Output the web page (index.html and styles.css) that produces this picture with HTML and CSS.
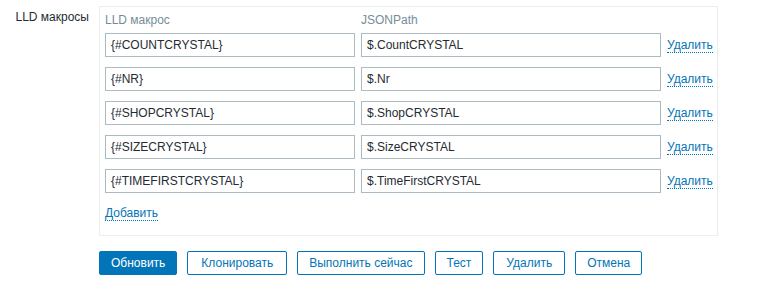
FILE: index.html
```html
<!DOCTYPE html>
<html>
<head>
<meta charset="utf-8">
<link rel="stylesheet" href="styles.css">
</head>
<body>
<div class="form-row">
  <div class="form-label">LLD макросы</div>
  <div class="form-field">
    <div class="macro-box">
      <div class="macro-grid macro-head">
        <div>LLD макрос</div>
        <div>JSONPath</div>
        <div></div>
      </div>
      <div class="macro-rows">
        <div class="macro-grid">
          <input class="text-input macro" type="text" value="{#COUNTCRYSTAL}">
          <input class="text-input path" type="text" value="$.CountCRYSTAL">
          <a class="link">Удалить</a>
        </div>
        <div class="macro-grid">
          <input class="text-input macro" type="text" value="{#NR}">
          <input class="text-input path" type="text" value="$.Nr">
          <a class="link">Удалить</a>
        </div>
        <div class="macro-grid">
          <input class="text-input macro" type="text" value="{#SHOPCRYSTAL}">
          <input class="text-input path" type="text" value="$.ShopCRYSTAL">
          <a class="link">Удалить</a>
        </div>
        <div class="macro-grid">
          <input class="text-input macro" type="text" value="{#SIZECRYSTAL}">
          <input class="text-input path" type="text" value="$.SizeCRYSTAL">
          <a class="link">Удалить</a>
        </div>
        <div class="macro-grid">
          <input class="text-input macro" type="text" value="{#TIMEFIRSTCRYSTAL}">
          <input class="text-input path" type="text" value="$.TimeFirstCRYSTAL">
          <a class="link">Удалить</a>
        </div>
      </div>
      <div class="add-row"><a class="link">Добавить</a></div>
    </div>
  </div>
</div>
<div class="buttons">
  <button class="btn btn-primary">Обновить</button>
  <button class="btn btn-wide">Клонировать</button>
  <button class="btn">Выполнить сейчас</button>
  <button class="btn">Тест</button>
  <button class="btn btn-mid">Удалить</button>
  <button class="btn">Отмена</button>
</div>
</body>
</html>
```
FILE: styles.css
```css
html, body {
  margin: 0;
  padding: 0;
  background: #ffffff;
}
body {
  font-family: "Liberation Sans", Arial, sans-serif;
  font-size: 12px;
  color: #1f2c33;
}
.form-row {
  display: flex;
  padding-top: 6px;
}
.form-label {
  width: 89px;
  padding-right: 10px;
  text-align: right;
  padding-top: 4px;
  line-height: 14px;
}
.macro-box {
  width: 607px;
  height: 218px;
  border: 1px solid #ebeef0;
  padding: 5px;
  display: flex;
  flex-direction: column;
}
.macro-grid {
  display: grid;
  grid-template-columns: 250px 300px auto;
  column-gap: 6px;
  align-items: center;
}
.macro-head {
  height: 16px;
  color: #768d99;
  margin-bottom: 5px;
  line-height: 16px;
}
.macro-rows {
  display: flex;
  flex-direction: column;
  gap: 10px;
}
.text-input {
  box-sizing: border-box;
  height: 24px;
  border: 1px solid #acbbc2;
  padding: 0 5px;
  margin: 0;
  font-family: "Liberation Sans", Arial, sans-serif;
  font-size: 12px;
  color: #1f2c33;
  background: #ffffff;
  outline: none;
}
.macro {
  width: 250px;
}
.path {
  width: 300px;
}
.link {
  color: #0275b8;
  border-bottom: 1px dotted #0275b8;
  cursor: pointer;
  line-height: 14px;
  justify-self: start;
}
.add-row {
  padding-top: 13px;
  line-height: 14px;
}
.buttons {
  display: flex;
  gap: 10px;
  padding-left: 99px;
  margin-top: 15px;
}
.btn {
  box-sizing: border-box;
  height: 24px;
  padding: 0 11px;
  border: 1px solid #0275b8;
  border-radius: 2px;
  background: #ffffff;
  color: #0275b8;
  font-family: "Liberation Sans", Arial, sans-serif;
  font-size: 12px;
  line-height: 22px;
  margin: 0;
}
.btn-wide {
  padding: 0 13px;
}
.btn-mid {
  padding: 0 12px;
}
.btn-primary {
  background: #0275b8;
  color: #ffffff;
}
```
